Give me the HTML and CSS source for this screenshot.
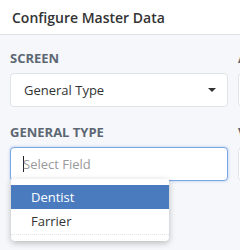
FILE: index.html
```html
<!DOCTYPE html>
<html>
<head>
<meta charset="utf-8">
<link rel="stylesheet" href="styles.css">
</head>
<body>
<header class="topbar"><h1 class="title">Configure Master Data</h1></header>
<main class="content">
  <div class="field">
    <label class="label">Screen</label>
    <div class="select">
      <span class="select-text">General Type</span>
      <span class="caret"></span>
    </div>
  </div>
  <div class="field">
    <label class="label">Active</label>
    <div class="select"></div>
  </div>
  <div class="field">
    <label class="label">General Type</label>
    <div class="combo">
      <div class="input focused"><span class="cursor"></span><span class="placeholder">Select Field</span></div>
      <ul class="menu">
        <li class="option active">Dentist</li>
        <li class="option">Farrier</li>
      </ul>
    </div>
  </div>
  <div class="field">
    <label class="label">Value</label>
    <div class="select"></div>
  </div>
</main>
</body>
</html>
```
FILE: styles.css
```css
* { box-sizing: border-box; }
html, body { margin: 0; padding: 0; }
body {
  background: #f5f7fa;
  font-family: "Open Sans", "Liberation Sans", sans-serif;
  width: 240px;
  height: 250px;
  overflow: hidden;
}
.topbar {
  background: #fff;
  height: 35px;
  border-bottom: 1px solid #dce1e7;
  padding: 0 12px;
  display: flex;
  align-items: center;
}
.title {
  margin: 0;
  font-size: 14px;
  font-weight: 600;
  color: #333;
  letter-spacing: 0;
}
.content {
  display: grid;
  grid-template-columns: 218px 218px;
  column-gap: 10px;
  row-gap: 17px;
  padding: 15px 10px 0 10px;
}
.field { display: flex; flex-direction: column; }
.label {
  font-size: 13px;
  font-weight: 700;
  color: #5d6773;
  text-transform: uppercase;
  line-height: 16px;
  margin-bottom: 7px;
}
.select {
  height: 34px;
  background: #fff;
  border: 1px solid #e0e4e9;
  border-radius: 4px;
  display: flex;
  align-items: center;
  justify-content: space-between;
  padding: 0 10px 0 13px;
  font-size: 13px;
  color: #333;
}
.caret {
  width: 0; height: 0;
  border-left: 4px solid transparent;
  border-right: 4px solid transparent;
  border-top: 4px solid #333;
  margin-right: 1px;
}
.combo { position: relative; }
.input {
  height: 34px;
  background: #fff;
  border: 1px solid #7aa7e3;
  border-radius: 4px;
  box-shadow: 0 0 3px rgba(102, 150, 230, 0.5);
  display: flex;
  align-items: center;
  padding-left: 12px;
  font-size: 13px;
}
.cursor {
  width: 1px; height: 16px;
  background: #222;
  margin-right: -1px;
}
.placeholder { color: #999; }
.menu {
  position: absolute;
  top: 32px;
  left: 1px;
  width: 158px;
  margin: 0;
  padding: 6px 0 6px 0;
  list-style: none;
  background: #fff;
  border-radius: 0 0 4px 4px;
  box-shadow: 0 2px 6px rgba(0,0,0,0.25);
  font-size: 13px;
}
.option {
  height: 26px;
  line-height: 25px;
  padding-left: 20px;
  color: #333;
  border-bottom: 1px dotted #e4e4e4;
}
.option.active {
  background: #4a7bbf;
  color: #fff;
  border-bottom: none;
  height: 24px;
  line-height: 24px;
}
```
